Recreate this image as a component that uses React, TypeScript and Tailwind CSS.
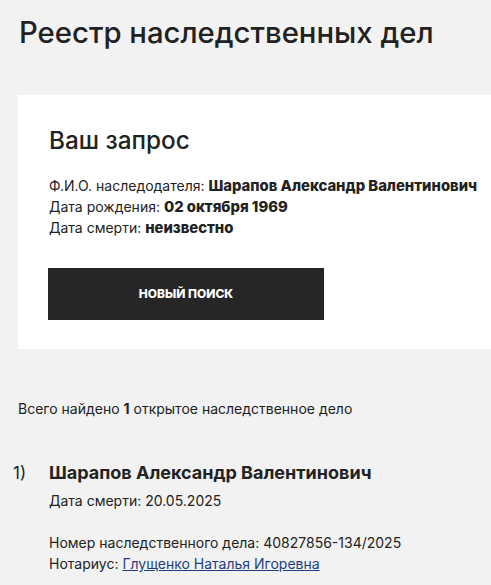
export default function App() {
  return (
    <div className="min-h-[585px] w-[491px] overflow-hidden bg-[#f2f2f2] text-[#222]" style={{ fontFamily: 'Inter, "Liberation Sans", Arial, sans-serif' }}>
      <h1 className="pl-[19px] pt-[14px] text-[29.3px] leading-[37px] font-medium whitespace-nowrap">Реестр наследственных дел</h1>
      <div className="ml-[18px] mt-[44px] h-[254px] bg-white pl-[31px] pt-[29px]">
        <h2 className="text-[24.3px] leading-[33px] font-medium">Ваш запрос</h2>
        <div className="mt-[18px] text-[14px] leading-[21px] whitespace-nowrap">
          <div className="h-[21px]">Ф.И.О. наследодателя: <span className="text-[14.8px] font-extrabold">Шарапов Александр Валентинович</span></div>
          <div className="h-[21px]">Дата рождения: <span className="text-[14.8px] font-extrabold">02 октября 1969</span></div>
          <div className="h-[21px]">Дата смерти: <span className="text-[14.8px] font-extrabold">неизвестно</span></div>
        </div>
        <button className="-ml-px mt-[30px] flex h-[52px] w-[276px] items-center justify-center bg-[#262626] text-[12px] font-extrabold text-white">НОВЫЙ ПОИСК</button>
      </div>
      <div className="pl-[18px] pt-[50px] text-[14px] leading-[20px]">Всего найдено <b>1</b> открытое наследственное дело</div>
      <div className="mt-[42px] flex">
        <div className="w-[49px] pl-[13px] text-[17px] leading-[24px]">1)</div>
        <div>
          <div className="text-[18px] leading-[24px] font-bold">Шарапов Александр Валентинович</div>
          <div className="mt-[5px] text-[14px] leading-[21px]">Дата смерти: 20.05.2025</div>
          <div className="mt-[21px] text-[14px] leading-[21px]">Номер наследственного дела: 40827856-134/2025</div>
          <div className="text-[14px] leading-[21px]">Нотариус: <a href="#" className="text-[#1f3f7a] underline">Глущенко Наталья Игоревна</a></div>
        </div>
      </div>
    </div>
  );
}
